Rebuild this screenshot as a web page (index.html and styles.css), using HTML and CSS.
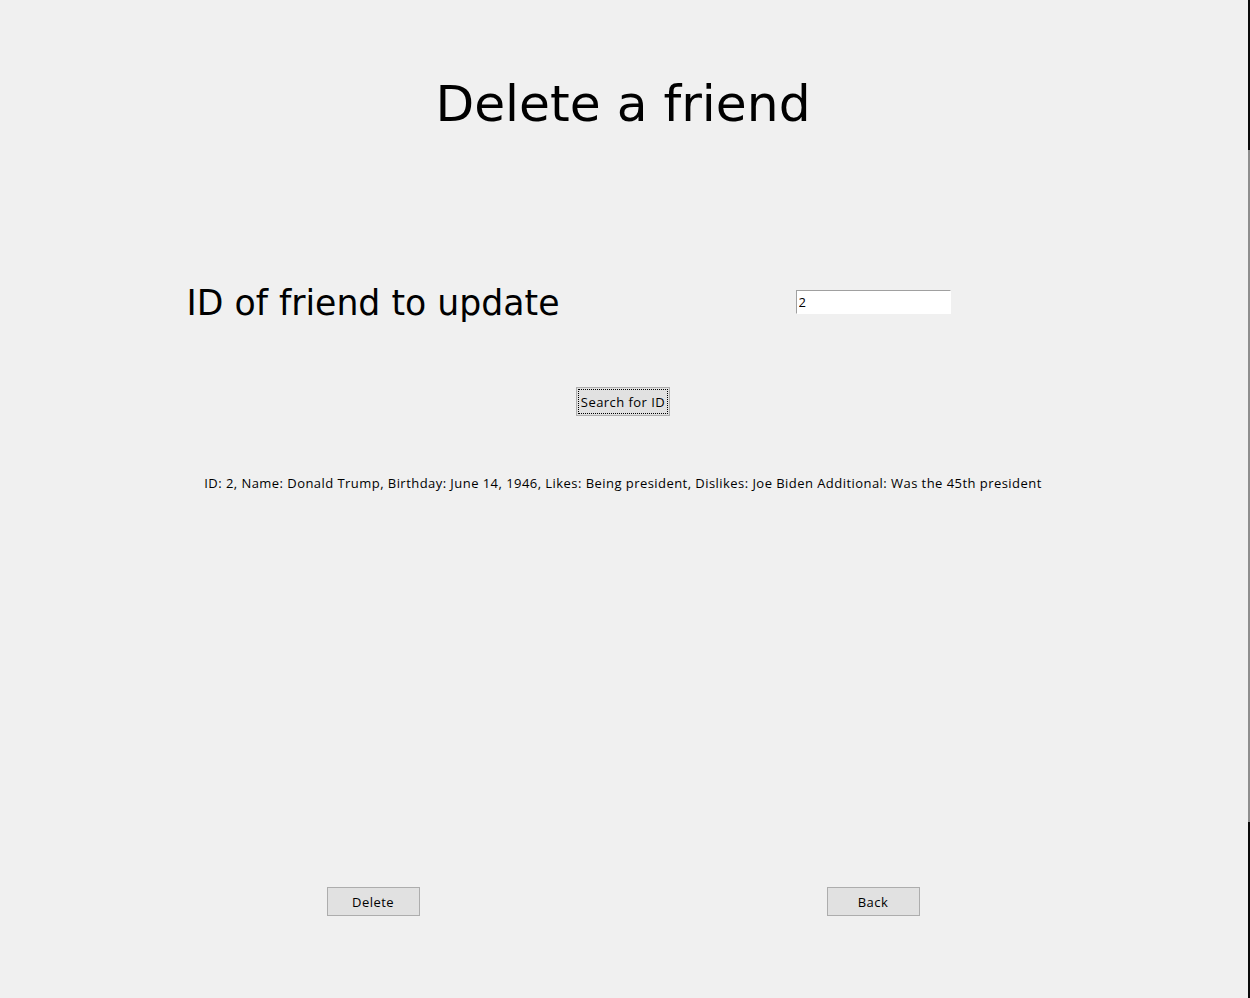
FILE: index.html
```html
<!DOCTYPE html>
<html lang="en">
<head>
<meta charset="utf-8">
<title>Delete a friend</title>
<link rel="stylesheet" href="styles.css">
</head>
<body>
<div class="window">
  <h1 class="title">Delete a friend</h1>
  <div class="form-row">
    <div class="cell"><span class="label">ID of friend to update</span></div>
    <div class="cell"><input class="entry" type="text" value="2"></div>
  </div>
  <button class="btn btn-focus">Search for ID</button>
  <p class="info">ID: 2, Name: Donald Trump, Birthday: June 14, 1946, Likes: Being president, Dislikes: Joe Biden Additional: Was the 45th president</p>
  <div class="actions">
    <div class="cell"><button class="btn">Delete</button></div>
    <div class="cell"><button class="btn">Back</button></div>
  </div>
</div>
<div class="edge">
  <div class="edge-dark edge-top"></div>
  <div class="edge-mid"></div>
  <div class="edge-dark edge-bottom"></div>
</div>
</body>
</html>
```
FILE: styles.css
```css
html, body {
  margin: 0;
  padding: 0;
}
body {
  width: 1250px;
  height: 998px;
  background: #f0f0f0;
  display: flex;
  overflow: hidden;
  font-family: "Open Sans", "Noto Sans", sans-serif;
  color: #000;
}
.window {
  flex: 1;
  display: flex;
  flex-direction: column;
  align-items: center;
  padding-right: 2px;
}
.title {
  margin: 74px 0 0;
  height: 60px;
  line-height: 60px;
  font-family: "DejaVu Sans", Verdana, sans-serif;
  font-size: 50.3px;
  font-weight: normal;
}
.form-row,
.actions {
  width: 1000px;
  display: grid;
  grid-template-columns: 1fr 1fr;
}
.form-row {
  margin-top: 138px;
  height: 60px;
}
.cell {
  display: flex;
  align-items: center;
  justify-content: center;
}
.label {
  font-family: "DejaVu Sans", Verdana, sans-serif;
  font-size: 34.7px;
  line-height: 60px;
  position: relative;
  top: 1px;
}
.entry {
  box-sizing: border-box;
  width: 155px;
  height: 24px;
  margin: 0;
  padding: 0 2px;
  border: 1px solid;
  border-color: #a0a0a0 #ffffff #ffffff #a0a0a0;
  background: #fff;
  font-family: "Open Sans", sans-serif;
  font-size: 13px;
  color: #000;
  outline: none;
}
.btn {
  box-sizing: border-box;
  width: 93px;
  height: 29px;
  margin: 0;
  padding: 0;
  background: #e1e1e1;
  border: 1px solid #adadad;
  border-radius: 0;
  font-family: "Open Sans", sans-serif;
  font-size: 13px;
  letter-spacing: 0.45px;
  color: #000;
}
.btn-focus {
  width: 94px;
  margin-top: 55px;
  outline: 1px dotted #000;
  outline-offset: -3px;
}
.info {
  margin: 57px 0 0;
  height: 20px;
  line-height: 20px;
  font-size: 13px;
  letter-spacing: 0.45px;
  white-space: nowrap;
}
.actions {
  margin-top: 394px;
  height: 29px;
}
.edge {
  width: 2px;
  display: flex;
  flex-direction: column;
}
.edge-dark {
  background: #0a0a0a;
}
.edge-top {
  height: 150px;
}
.edge-mid {
  flex: 1;
  background: #8e8e8e;
}
.edge-bottom {
  height: 176px;
}
```
